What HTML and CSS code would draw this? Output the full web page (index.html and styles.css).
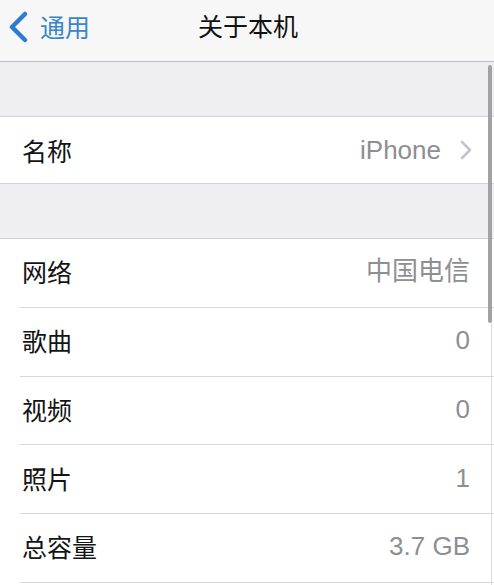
FILE: index.html
```html
<!DOCTYPE html>
<html lang="zh">
<head>
<meta charset="utf-8">
<title>关于本机</title>
<link rel="stylesheet" href="styles.css">
</head>
<body>
<div class="screen">
  <header class="nav">
    <div class="back">
      <svg class="back-icon" width="22" height="32" viewBox="0 0 22 32"><path d="M18 3 L5 16 L18 29" fill="none" stroke="#2f7bd0" stroke-width="4.5" stroke-linecap="round" stroke-linejoin="round"/></svg>
      <span class="back-label">通用</span>
    </div>
    <div class="title">关于本机</div>
  </header>
  <div class="gap"></div>
  <section class="group">
    <div class="row">
      <span class="label">名称</span>
      <span class="value">iPhone</span>
      <svg class="chev" width="14" height="20" viewBox="0 0 14 20"><path d="M3 2 L11 10 L3 18" fill="none" stroke="#c4c4c9" stroke-width="2.6" stroke-linecap="round" stroke-linejoin="round"/></svg>
    </div>
  </section>
  <div class="gap"></div>
  <section class="group list">
    <div class="row inset"><span class="label">网络</span><span class="value">中国电信</span></div>
    <div class="row inset"><span class="label">歌曲</span><span class="value">0</span></div>
    <div class="row inset"><span class="label">视频</span><span class="value">0</span></div>
    <div class="row inset"><span class="label">照片</span><span class="value">1</span></div>
    <div class="row inset"><span class="label">总容量</span><span class="value">3.7 GB</span></div>
  </section>
  <div class="scroll-thumb"></div>
  <div class="scroll-edge"></div>
</div>
</body>
</html>
```
FILE: styles.css
```css
html, body {
  margin: 0;
  padding: 0;
  background: #ffffff;
}
body {
  font-family: "Liberation Sans", "Noto Sans CJK SC", sans-serif;
  color: #111111;
}
.screen {
  position: relative;
  width: 494px;
  height: 585px;
  overflow: hidden;
  background: #ffffff;
}
.nav {
  position: relative;
  height: 62px;
  box-sizing: border-box;
  background: #f7f7f8;
  border-bottom: 1px solid #bdbdc0;
  display: flex;
  align-items: center;
}
.back {
  display: flex;
  align-items: center;
  padding-left: 7px;
  gap: 11px;
  margin-top: -7px;
}
.back-label {
  font-size: 25px;
  color: #3a86c6;
  font-family: "Noto Sans CJK SC", sans-serif;
  line-height: 30px;
  margin-top: -2px;
}
.title {
  position: absolute;
  left: 0;
  right: 0;
  top: 8px;
  text-align: center;
  font-size: 25px;
  line-height: 34px;
  font-family: "Noto Sans CJK SC", sans-serif;
  color: #111111;
  padding-left: 2px;
}
.gap {
  height: 55px;
  box-sizing: border-box;
  background: #efeff3;
  border-bottom: 1px solid #d3d3d6;
}
.group {
  background: #ffffff;
}
.row {
  display: flex;
  align-items: center;
  height: 67px;
  box-sizing: border-box;
  border-bottom: 1px solid #d3d3d6;
  padding: 0 23px 1px 22px;
}
.row.inset {
  height: 68.75px;
  border-bottom: none;
  background-image: linear-gradient(#d8d8db, #d8d8db);
  background-repeat: no-repeat;
  background-size: calc(100% - 20px) 1px;
  background-position: 20px 100%;
  padding-right: 24px;
  padding-bottom: 4px;
}
.label {
  flex: 1;
  font-size: 25px;
  font-family: "Noto Sans CJK SC", sans-serif;
  line-height: 30px;
  color: #141414;
}
.value {
  font-size: 26px;
  line-height: 30px;
  color: #8e8e93;
}
.chev {
  margin-left: 18px;
  margin-right: -2px;
}
.scroll-thumb {
  position: absolute;
  left: 488px;
  top: 65px;
  width: 4px;
  height: 258px;
  background: #a2a2a6;
  border-radius: 2px;
}
.scroll-edge {
  position: absolute;
  left: 491px;
  top: 323px;
  width: 1px;
  height: 262px;
  background: #dcdcdf;
}
```
